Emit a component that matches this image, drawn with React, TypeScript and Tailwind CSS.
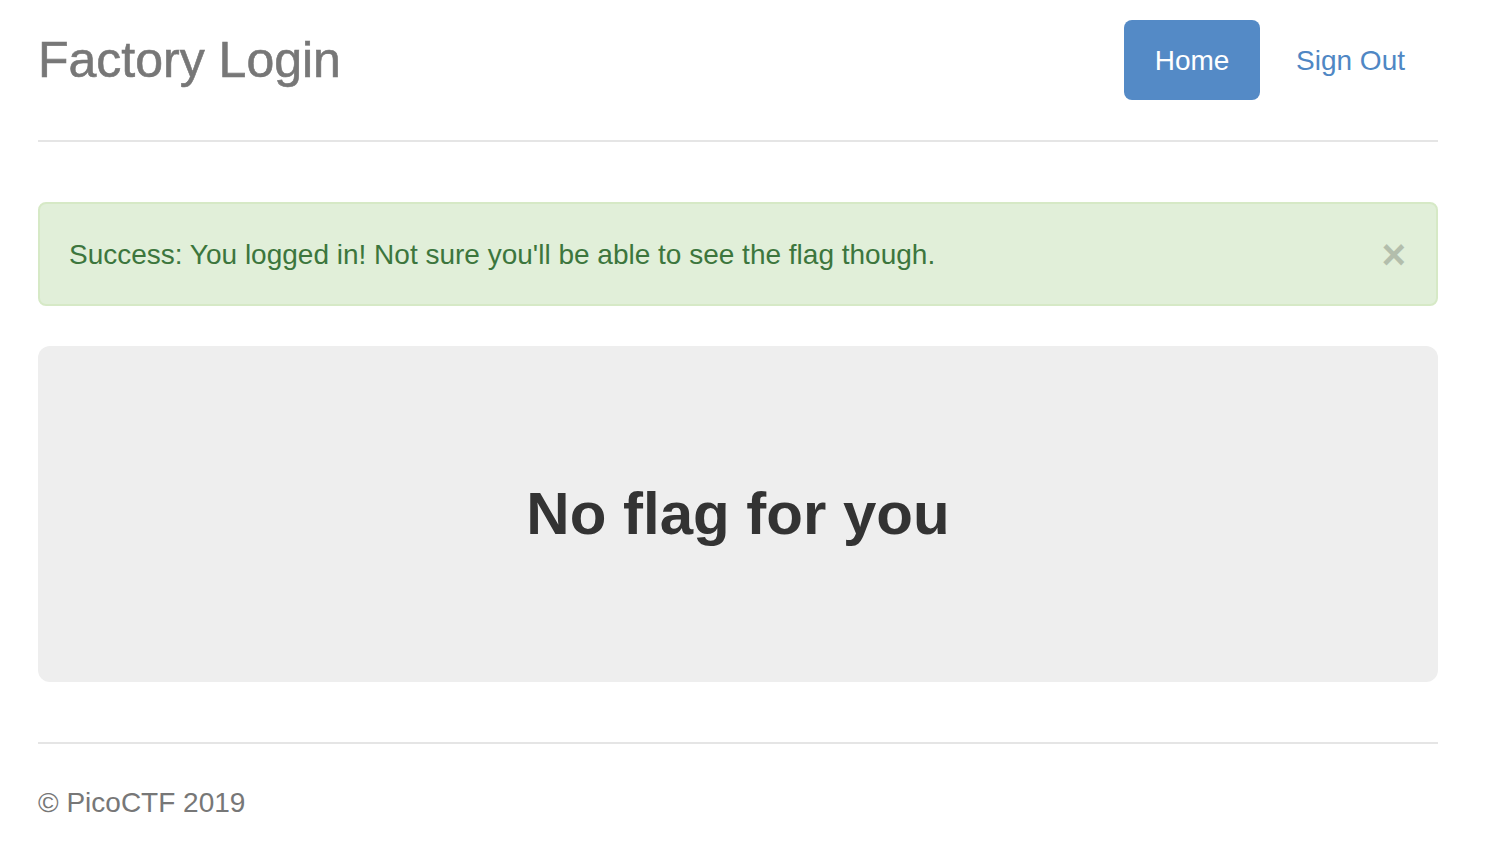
import React from 'react';

const App: React.FC = () => {
  return (
    <div className="min-h-screen bg-white font-['Liberation_Sans',Arial,sans-serif] text-[28px] leading-[40px] text-[#333]">
      <div className="ml-[38px] w-[1400px] pt-[20px]">
        {/* header */}
        <div className="flex items-center justify-between border-b-2 border-[#e5e5e5] pb-[40px]">
          <h3 className="text-[50px] font-medium leading-[80px] text-[#777] [-webkit-text-stroke:0.6px_#777]">Factory Login</h3>
          <nav className="flex gap-[6px]">
            <a className="block h-[80px] w-[136px] rounded-[8px] bg-[#548ac6] text-center leading-[82px] text-white">Home</a>
            <a className="block h-[80px] pl-[30px] pr-[33px] leading-[82px] text-[#4f87c4]">Sign Out</a>
          </nav>
        </div>

        {/* alert */}
        <div className="mt-[60px] flex items-center justify-between rounded-[8px] border-2 border-[#d6e9c6] bg-[#e1efd9] pb-[29px] pl-[29px] pr-[30px] pt-[31px] text-[#3c763d]">
          <span>Success: You logged in! Not sure you'll be able to see the flag though.</span>
          <button className="h-[40px] text-[42px] font-bold leading-[38px] text-black opacity-20">×</button>
        </div>

        {/* jumbotron */}
        <div className="mt-[40px] flex h-[336px] items-center justify-center rounded-[12px] bg-[#eeeeee]">
          <h1 className="text-[60px] font-bold leading-[80px] text-[#333]">No flag for you</h1>
        </div>

        {/* footer */}
        <div className="mt-[60px] border-t-2 border-[#e5e5e5] pt-[39px] text-[#777]">
          <p>© PicoCTF 2019</p>
        </div>
      </div>
    </div>
  );
};

export default App;
